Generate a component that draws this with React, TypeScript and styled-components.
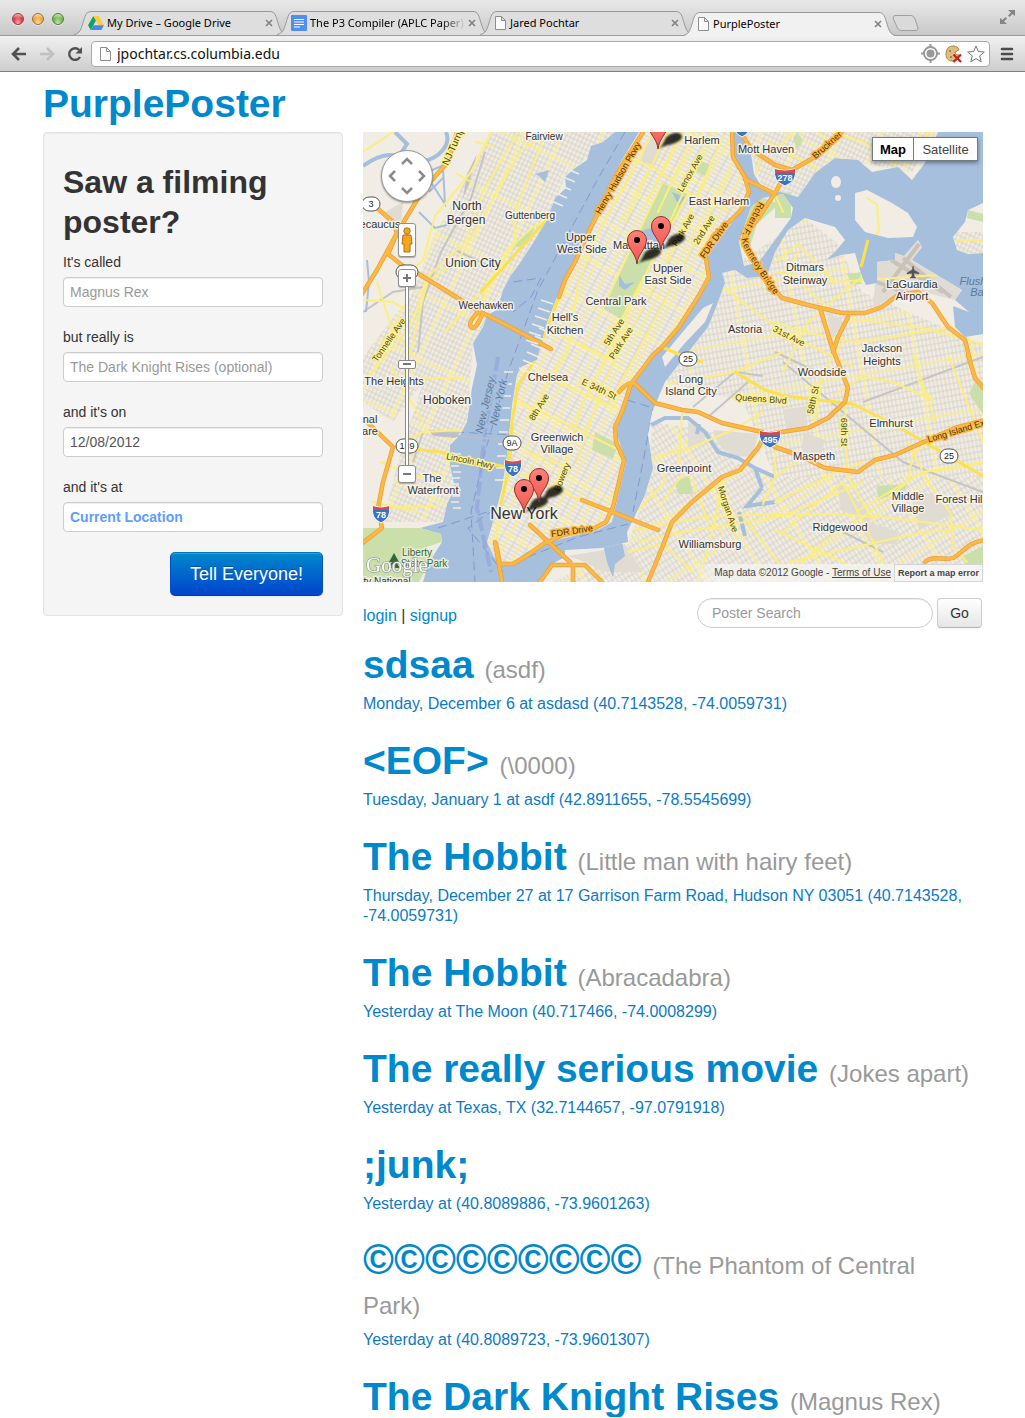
import React from "react";
import styled, { createGlobalStyle, css } from "styled-components";

const sans = `"Liberation Sans", Helvetica, Arial, sans-serif`;
const system = `"Lucida Grande", "Noto Sans", "Open Sans", sans-serif`;

const GlobalStyle = createGlobalStyle`
  *, *::before, *::after { box-sizing: border-box; }
  body { margin: 0; background: #fff; color: #333; font: 14px/20px ${sans}; }
  button, input { font-family: inherit; margin: 0; }
  a { color: #08c; text-decoration: none; }
`;

/* ---------- browser chrome ---------- */

const TabStrip = styled.div`
  display: flex;
  align-items: flex-end;
  height: 36px;
  padding: 0 10px 0 12px;
  background: linear-gradient(#e9e9e9, #c8c8c8);
  border-bottom: 1px solid #9c9c9c;
`;

const Lights = styled.div`
  display: flex;
  gap: 8px;
  width: 62px;
  padding-bottom: 10px;
`;

const Light = styled.button<{ $tone: string; $edge: string }>`
  width: 12px;
  height: 12px;
  padding: 0;
  border: 1px solid ${(p) => p.$edge};
  border-radius: 50%;
  background: radial-gradient(ellipse at 50% 95%, #fff9 0, transparent 55%),
    linear-gradient(#fff9, transparent 45%), ${(p) => p.$tone};
  box-shadow: 0 1px 0 #fff8;
`;

const TabBox = styled.div<{ $active?: boolean }>`
  position: relative;
  display: flex;
  align-items: center;
  flex: 0 1 213px;
  min-width: 0;
  height: 24px;
  margin-right: -10px;
  padding: 0 12px 0 14px;
  z-index: ${(p) => (p.$active ? 2 : 1)};
  margin-bottom: ${(p) => (p.$active ? "-1px" : "0")};
`;

const TabShape = styled.svg`
  position: absolute;
  inset: 0;
  width: 100%;
  height: 100%;
  z-index: -1;
`;

const TabLabel = styled.button<{ $faded?: boolean }>`
  display: flex;
  align-items: center;
  gap: 3px;
  flex: 1;
  min-width: 0;
  padding: 0;
  border: 0;
  background: none;
  color: #000;
  font: 11px/16px ${system};
  text-align: left;
  white-space: nowrap;
  overflow: hidden;
  ${(p) => p.$faded && css`mask-image: linear-gradient(90deg, #000 86%, transparent);`}
  svg { flex: none; }
`;

const CloseButton = styled.button`
  display: flex;
  padding: 2px;
  border: 0;
  background: none;
`;

const NewTab = styled.button`
  padding: 0;
  border: 0;
  background: none;
  height: 16px;
  margin: 0 auto 4px 6px;
`;

const FullScreen = styled.button`
  padding: 0;
  border: 0;
  background: none;
  height: 14px;
  margin-bottom: 11px;
`;

const Toolbar = styled.div`
  display: flex;
  align-items: center;
  height: 36px;
  padding: 0 11px 0 5px;
  background: linear-gradient(#f1f1f1, #cdcdcd);
  border-bottom: 1px solid #808080;
`;

const ToolButton = styled.button`
  display: flex;
  align-items: center;
  justify-content: center;
  width: 28px;
  height: 24px;
  padding: 0;
  border: 0;
  background: none;
`;

const AddressBar = styled.div`
  display: flex;
  align-items: center;
  flex: 1;
  gap: 5px;
  height: 26px;
  margin: 0 10px 0 2px;
  padding: 0 4px 0 7px;
  background: #fff;
  border: 1px solid #a9a9a9;
  border-radius: 4px;
`;

const AddressInput = styled.input`
  flex: 1;
  min-width: 0;
  padding: 0;
  border: 0;
  outline: 0;
  color: #111;
  background: none;
  font: 14px/18px ${system};
`;

/* ---------- page ---------- */

const Page = styled.main`
  padding: 12px 42px 0 43px;
`;

const Brand = styled.h1`
  margin: 0 0 8px;
  font-size: 39px;
  line-height: 40px;
`;

const Columns = styled.div`
  display: grid;
  grid-template-columns: 300px minmax(0, 1fr);
  gap: 20px;
  align-items: start;
`;

const Panel = styled.form`
  display: flex;
  flex-direction: column;
  gap: 20px;
  padding: 19px;
  background: #f5f5f5;
  border: 1px solid #e3e3e3;
  border-radius: 4px;
  box-shadow: inset 0 1px 1px #0000000d;
`;

const PanelTitle = styled.h2`
  margin: 10px 0 -10px;
  font-size: 32px;
  line-height: 40px;
`;

const Field = styled.div`
  display: flex;
  flex-direction: column;
  gap: 5px;
`;

const textBox = css`
  height: 30px;
  padding: 4px 6px;
  border: 1px solid #ccc;
  border-radius: 4px;
  background: #fff;
  color: #555;
  font-size: 14px;
  line-height: 20px;
  box-shadow: inset 0 1px 1px #00000013;
  &::placeholder { color: #999; opacity: 1; }
`;

const TextInput = styled.input<{ $located?: boolean }>`
  ${textBox}
  ${(p) => p.$located && css`&::placeholder { color: #5f9cff; font-weight: bold; }`}
`;

const SubmitButton = styled.button`
  align-self: flex-end;
  width: 153px;
  height: 44px;
  padding: 0;
  border: 1px solid #0055bb;
  border-color: #0077b8 #0050c0 #003ba8;
  border-radius: 5px;
  background: linear-gradient(#08c, #04c);
  box-shadow: inset 0 1px 0 #ffffff33, 0 1px 2px #0000000d;
  color: #fff;
  font-size: 18px;
  line-height: 20px;
  text-shadow: 0 -1px 0 #00000040;
`;

const ActionRow = styled.div`
  display: flex;
  align-items: center;
  justify-content: space-between;
  margin: 16px 1px 17px 0;
`;

const Account = styled.nav`
  padding-top: 5px;
  font-size: 16px;
  line-height: 20px;
`;

const SearchForm = styled.form`
  display: flex;
  gap: 4px;
`;

const SearchInput = styled.input`
  ${textBox}
  width: 236px;
  padding: 4px 14px;
  border-radius: 15px;
`;

const GoButton = styled.button`
  width: 45px;
  height: 30px;
  padding: 0;
  border: 1px solid #ccc;
  border-bottom-color: #b3b3b3;
  border-radius: 4px;
  background: linear-gradient(#fff, #e6e6e6);
  box-shadow: inset 0 1px 0 #ffffff33, 0 1px 2px #0000000d;
  color: #333;
  font-size: 14px;
  line-height: 20px;
`;

const PosterList = styled.ul`
  display: flex;
  flex-direction: column;
  gap: 27px;
  margin: 0;
  padding: 0;
  list-style: none;
`;

const PosterTitle = styled.h1<{ $symbols?: boolean }>`
  margin: 0;
  padding-right: 8px;
  font-size: 39px;
  line-height: 40px;
  a { ${(p) => p.$symbols && css`font-size: 42px; line-height: 20px;`} }
  small { color: #999; font-size: 24px; font-weight: normal; line-height: 20px; }
`;

const PosterDetail = styled.a`
  display: block;
  margin-top: 9px;
  color: #0c7ac4;
  font-size: 16px;
  line-height: 20px;
`;

/* ---------- map ---------- */

const MapFrame = styled.section`
  position: relative;
  height: 450px;
  overflow: hidden;
  background: #a5bfdd;
`;

const MapSvg = styled.svg`
  display: block;
  width: 100%;
  height: 100%;
`;

const MapControls = styled.div`
  position: absolute;
  top: 18px;
  left: 18px;
  display: flex;
  flex-direction: column;
  align-items: center;
  width: 52px;
`;

const PanPad = styled.div`
  display: grid;
  grid-template: 1fr 1fr 1fr / 1fr 1fr 1fr;
  width: 52px;
  height: 52px;
  padding: 2px;
  border: 1px solid #999;
  border-radius: 50%;
  background: #fff;
  box-shadow: 0 1px 2px #0006;
`;

const PanButton = styled.button<{ $area: string; $turn: number }>`
  grid-area: ${(p) => p.$area};
  display: flex;
  align-items: center;
  justify-content: center;
  padding: 0;
  border: 0;
  background: none;
  svg { transform: rotate(${(p) => p.$turn}deg); }
`;

const mapKey = css`
  display: flex;
  align-items: center;
  justify-content: center;
  width: 18px;
  padding: 0;
  border: 1px solid #8f8f8f;
  border-radius: 3px;
  background: #fff;
  box-shadow: 0 1px 1px #0004;
`;

const Pegman = styled.button`
  ${mapKey}
  height: 34px;
  margin: 21px 0 12px;
`;

const ZoomKey = styled.button`
  ${mapKey}
  height: 18px;
`;

const ZoomSlider = styled.input`
  writing-mode: vertical-lr;
  direction: rtl;
  appearance: none;
  width: 18px;
  height: 178px;
  background: linear-gradient(90deg, transparent 7px, #8a8a8a 7px, #8a8a8a 8px, #fff 8px, #fff 10px, #8a8a8a 10px, #8a8a8a 11px, transparent 11px);
  &::-webkit-slider-thumb {
    appearance: none;
    width: 18px;
    height: 9px;
    border: 1px solid #8a8a8a;
    border-radius: 2px;
    background: linear-gradient(#777, #777) center / 8px 2px no-repeat, #fff;
  }
`;

const MapTypes = styled.div`
  position: absolute;
  top: 5px;
  right: 5px;
  display: flex;
  box-shadow: 0 2px 4px #0006;
`;

const MapType = styled.button<{ $on?: boolean }>`
  height: 24px;
  width: ${(p) => (p.$on ? 42 : 64)}px;
  padding: 0;
  border: 1px solid #717b87;
  border-left-width: ${(p) => (p.$on ? 1 : 0)}px;
  background: #fff;
  color: ${(p) => (p.$on ? "#000" : "#444")};
  font-size: 13px;
  font-weight: ${(p) => (p.$on ? "bold" : "normal")};
`;

const Attribution = styled.div`
  position: absolute;
  right: 0;
  bottom: 0;
  display: flex;
  align-items: center;
  gap: 3px;
  height: 18px;
  padding-left: 24px;
  background: linear-gradient(90deg, #f5f5f500, #f5f5f5bb 30px);
  color: #444;
  font-size: 10px;
  line-height: 16px;
  a { color: #444; text-decoration: underline; }
`;

const ReportLink = styled.a`
  padding: 0 3px;
  border: 1px solid #d5d5d5;
  background: #f5f5f5;
  font-size: 9px;
  font-weight: bold;
  && { text-decoration: none; }
`;

const westLand =
  "M0 0H252L240 10L228 14L224 28L212 36L202 45L203 56L192 66L184 88L170 111L157 131L148 143L140 158L134 178L124 183L120 195L110 211L114 233L109 256L104 290L97 303L87 313V333L92 356L84 372L80 390L57 396L78 402L79 410L70 424L64 436L60 450H0Z";
const manhattan =
  "M276 0L259 28L239 68L225 101L202 145L194 165L184 191L174 228L158 235L154 243L149 273L144 323L139 356L132 383L124 410L130 423L137 433H147L164 420L184 410L202 406L235 398L249 390L257 356L263 330L254 303L255 283L267 253L290 225L301 215L346 150L344 121L371 88L387 61L371 28L369 0Z";
const bronx =
  "M376 0L388 22L391 42L400 57L418 60L435 65L452 41L472 26L495 28L509 40L535 35L549 48L562 31L575 0Z";
const queens =
  "M359 141L372 138L384 146L404 144L412 120L425 98L442 86L472 95L482 108L472 120L463 128L478 123L492 121L499 145L503 153L514 151V130L532 128V121L541 124L555 108L559 115L549 128L599 158L592 168L612 185L606 180L590 174L592 195L602 205L620 202V450H179L187 433L202 425V418L239 416L265 410L264 400L269 390L282 363L290 336L285 303L289 280L302 250L319 228L345 195L352 178L362 151Z";
const eastLand = "M620 71L605 78L602 90L590 105L594 118L605 122L620 121Z";
const rikers = "M492 61L504 58L529 71L545 81L554 95L550 105L525 106L502 100L492 88Z";
const wards = "M388 75L400 66L420 62L430 76L428 86L412 108L396 130L381 134L376 110Z";
const roosevelt = "M350 171L342 190L322 211L302 235L299 225L318 202L340 176Z";

const highways = [
  "M94 0L85 30L60 58L34 101L14 138L-3 165",
  "M14 76L30 90L34 101L25 122L40 134L54 141L77 155L114 178L147 195L188 217",
  "M116 180C108 186 104 194 110 196C116 194 116 186 120 182",
  "M280 0L255 40L243 65L228 95L212 130L202 148L196 165",
  "M369 0L370 25L382 45L386 60L378 78L368 88L350 104L342 121L346 145L335 165L316 195L299 215L290 223L268 252L259 280L252 295L253 310L261 328L256 350L250 375L243 390L232 396L200 403L180 412L165 423L150 432L137 432L133 412",
  "M425 38L412 61L396 85L381 105L385 120L400 145L412 158L419 166L445 173L479 181L502 181L519 175L535 163L555 160L569 171L585 195L602 208L607 228L605 223L612 246L622 258",
  "M377 0L389 18L412 33L429 38L452 25L479 0M382 47L412 62",
  "M457 176L469 215L472 223L485 256L482 270L465 286L445 296L412 301L402 303L395 316L377 338L359 345L329 370L309 390L299 416L285 450",
  "M485 185L475 205L470 220",
  "M256 260C262 252 268 250 272 252L292 271L319 278L335 280L359 291L399 300L412 315L435 323L462 336L495 340L512 328L532 323L565 308L592 296L622 288",
  "M219 368L295 398M167 393L207 430M132 410L139 450",
  "M177 450L189 433L222 433L239 450M210 433V450",
  "M4 290L30 315L20 350L15 376L19 396L-3 413",
  "M562 430C570 422 585 430 592 425C602 418 606 410 622 408",
];

const avenues = [
  "M196 165L187 185L172 228L155 253L149 290L146 335L135 385L133 412",
  "M30 315L77 320L97 326L144 335L200 360L245 380M0 20L30 0M155 0L120 60L102 110L64 145L50 190L10 240L0 246",
  "M190 0L158 18L120 85L95 128L64 150L52 200L40 250M175 0L178 12L150 85L153 110L118 160L82 200M200 80L170 95L140 122L118 170",
  "M128 0L108 40L72 84L60 128L45 142M94 42L108 50M113 10L130 14M14 150L30 200L50 222M0 168L30 170L50 182",
  "M30 315L60 300L100 298M18 330L55 345L78 340M15 376L75 374M18 250L50 246L100 246M28 235L60 290M10 370L55 380",
  "M299 51L240 175M325 62L258 188M270 28L290 35L328 62L365 78M290 0L265 48L238 95L215 152L205 220L180 260",
  "M305 0L262 90M318 0L284 70M332 0L295 80M348 0L262 188L220 270L196 350M360 5L310 118L240 252L214 330M368 40L300 172L248 270M190 200L250 228M170 240L268 282M158 270L220 300L256 318M165 320L205 335",
  "M412 140L470 150L620 140M359 155L420 200L490 234M372 240L402 258L422 264L490 272L530 292L620 344M412 130L435 112L472 150M412 190L440 200L494 210L600 194M490 187L560 196L620 212",
  "M499 145L480 160L445 190L420 240M505 108L516 100L514 72L504 66M498 150L500 128L512 105",
  "M319 282L316 330L330 350L345 390L360 400M306 252L372 240L420 220M289 325L322 318L370 298L400 280M300 330L302 350L275 378M325 335L300 370M360 345L352 390L335 450",
  "M270 398L340 385L412 382L470 382L530 386L620 398M275 410L320 400L420 384L500 350M265 420L300 412L330 440M412 370L470 342L500 330M412 398L500 440M420 450L460 410L500 385L545 350L550 320",
  "M412 345L440 325M452 290L460 240L480 210M482 270L484 342L505 380L512 390M435 120L425 140L460 172M545 310L565 350L588 382L590 415L604 430M552 320L580 302M480 350L520 430M496 378L560 340L620 330",
  "M472 262L500 245L530 250L570 268M555 248L570 270M550 223L572 290M585 223L604 270L620 310M420 400L480 350M425 430L560 400L590 398M412 320L412 345L400 372M380 384L430 450",
  "M400 20L390 50M405 10L460 40M430 0L412 20M470 0L500 10L530 32L555 20L565 0M455 0L468 14M594 108H620M412 62L420 80",
];

const parks = [
  "M299 51L325 62L258 187L240 176Z",
  "M336 28L348 33L342 44L330 38Z",
  "M381 78L400 66L416 72L394 92L384 124L378 110Z",
  "M428 60L412 62V86L428 86Z",
  "M0 396L57 396L78 402L79 410L60 416L70 422L56 450H0Z",
  "M232 300L255 312L250 327L229 318Z",
  "M312 350L326 344L330 362L315 362Z",
  "M514 354L545 352L540 360L515 368Z",
  "M612 250H620V282L606 262Z",
  "M605 78L620 82V90L604 86Z",
  "M484 142L498 140L499 152L488 152Z",
  "M600 424L620 414V436L604 438Z",
  "M140 318L150 312L148 328L140 328Z",
  "M434 0L440 8L434 18L430 6Z",
  "M172 94L155 108L152 116L166 110Z",
  "M124 184L134 190L128 198L120 194Z",
];

const builtUp = [
  "M514 130L532 121L541 124L555 108L559 115L549 128L599 158L592 168L560 160L535 163L510 175Z",
  "M465 180L480 190L468 210Z",
  "M325 290L345 300L340 310L325 316Z",
  "M350 298L395 302L390 325L370 324L355 312Z",
  "M420 278L444 274V296L424 300Z",
  "M440 300L462 308L458 322L440 320Z",
  "M474 348L505 380L508 392L478 378Z",
  "M500 388L535 400L534 412L508 412L498 396Z",
  "M548 360L570 362L590 382L556 398Z",
  "M286 5L302 10L292 34L278 28Z",
  "M22 80L40 70L38 92L24 92Z",
  "M205 424L240 418L262 412L280 440H240L222 430Z",
];

type Label = [string, number, number, number?, number?];

const placeLabels: Label[] = [
  ["Fairview", 181, 8, 10], ["North", 104, 78, 12], ["Bergen", 103, 92, 12], ["Guttenberg", 167, 87, 10],
  ["Union City", 110, 135, 12], ["Weehawken", 123, 177, 10], ["Harlem", 339, 12, 11], ["Mott Haven", 403, 21, 11],
  ["ecaucus", 17, 96, 11], ["Upper", 218, 109, 11], ["West Side", 219, 121, 11], ["East Harlem", 356, 73, 11],
  ["Manhattan", 276, 117, 11], ["Upper", 305, 140, 11], ["East Side", 305, 152, 11], ["Central Park", 253, 173, 11],
  ["Hell's", 202, 189, 11], ["Kitchen", 202, 202, 11], ["Chelsea", 185, 249, 11], ["Greenwich", 194, 309, 11],
  ["Village", 194, 321, 11], ["Astoria", 382, 201, 11], ["Ditmars", 442, 139, 11], ["Steinway", 442, 152, 11],
  ["LaGuardia", 549, 156, 11], ["Airport", 549, 168, 11], ["Jackson", 519, 220, 11], ["Heights", 519, 233, 11],
  ["Woodside", 459, 244, 11], ["Elmhurst", 528, 295, 11], ["Maspeth", 451, 328, 11], ["Middle", 545, 368, 11],
  ["Village", 545, 380, 11], ["Forest Hil", 596, 371, 11], ["Ridgewood", 477, 399, 11], ["Williamsburg", 347, 416, 11],
  ["Greenpoint", 321, 340, 11], ["Long", 328, 251, 11], ["Island City", 328, 263, 11], ["Hoboken", 84, 272, 12],
  ["The Heights", 31, 253, 11], ["nal", 7, 291, 11], ["are", 7, 303, 11], ["The", 69, 350, 11],
  ["Waterfront", 70, 362, 11], ["New York", 161, 387, 16], ["ty National", 24, 453, 10],
];

const roadLabels: Label[] = [
  ["NJ Turnp", 90, 14, 10, -66], ["Tonnelle Ave", 26, 208, 9, -55], ["Lenox Ave", 327, 41, 9, -60],
  ["Park Ave", 320, 98, 9, -60], ["2nd Ave", 341, 98, 9, -58], ["5th Ave", 251, 200, 9, -57],
  ["Park Ave", 258, 211, 9, -57], ["8th Ave", 176, 275, 9, -58], ["Bowery", 199, 345, 9, -68],
  ["E 34th St", 236, 257, 9, 25], ["31st Ave", 426, 204, 9, 27], ["Queens Blvd", 398, 267, 9, 4],
  ["58th St", 450, 268, 9, -78], ["69th St", 481, 300, 9, 90], ["Morgan Ave", 365, 377, 9, 72],
  ["Lincoln Hwy", 107, 329, 9, 12],
];

const highwayLabels: Label[] = [
  ["Henry Hudson Pkwy", 255, 46, 9, -60], ["FDR Drive", 351, 108, 9, -55],
  ["Bruckner", 464, 13, 9, -42], ["FDR Drive", 209, 399, 9, -8], ["Long Island Ex", 593, 299, 9, -17],
];

const waterLabels: Label[] = [
  ["New Jersey", 122, 273, 11, -77], ["New York", 135, 270, 11, -77], ["Flush", 610, 153, 11], ["Ba", 614, 164, 11],
];

const MapText = ({ items, fill, halo, italic }: { items: Label[]; fill: string; halo: string; italic?: boolean }) => (
  <g fill={fill} stroke={halo} strokeWidth={3} strokeLinejoin="round" paintOrder="stroke" textAnchor="middle" fontStyle={italic ? "italic" : "normal"}>
    {items.map(([text, x, y, size = 11, angle = 0], i) => (
      <text key={i} x={x} y={y} fontSize={size} dominantBaseline={angle ? "central" : undefined} transform={`rotate(${angle} ${x} ${y})`}>{text}</text>
    ))}
  </g>
);

const Interstate = ({ x, y, n }: { x: number; y: number; n: string }) => {
  const w = n.length > 2 ? 10 : 8;
  return (
    <g transform={`translate(${x} ${y})`}>
      <path d={`M${-w} -8Q0 -5 ${w} -8Q${w + 3} 4 0 9Q${-w - 3} 4 ${-w} -8Z`} fill="#3b74c4" stroke="#fff" />
      <path d={`M${-w} -8Q0 -5 ${w} -8V-4H${-w}Z`} fill="#d44a4f" />
      <text y="4" fontSize="9" fontWeight="bold" fill="#fff" textAnchor="middle">{n}</text>
    </g>
  );
};

const RouteBadge = ({ x, y, n }: { x: number; y: number; n: string }) => {
  const w = n.length > 2 ? 11 : 9;
  return (
    <g transform={`translate(${x} ${y})`}>
      <rect x={-w} y="-7" width={w * 2} height="14" rx="7" fill="#fff" stroke="#555" />
      <text y="3" fontSize="9" fill="#222" textAnchor="middle">{n}</text>
    </g>
  );
};

const pins = [[295, 17], [298, 118], [274, 132], [176, 370], [161, 381]];

const Street = ({ id, angle, w, h, major, stripe }: { id: string; angle: number; w: number; h: number; major: number; stripe: number }) => (
  <pattern id={id} width={w * major} height={h * stripe} patternUnits="userSpaceOnUse" patternTransform={`rotate(${angle})`}>
    {Array.from({ length: major }, (_, i) => <path key={i} d={`M${i * w + 2} 0V${h * stripe}`} stroke="#d3cdc0" strokeWidth=".8" />)}
    {Array.from({ length: stripe }, (_, i) => <path key={i} d={`M0 ${i * h + 2}H${w * major}`} stroke="#d3cdc0" strokeWidth=".8" />)}
    <path d={`M2 0V${h * stripe}M0 2H${w * major}`} stroke="#fbef8d" strokeWidth="1.6" />
  </pattern>
);

const CityMap = () => (
  <MapSvg viewBox="0 0 620 450" preserveAspectRatio="xMidYMid slice" role="img" aria-label="Map of New York" fontFamily="Liberation Sans, Arial, sans-serif">
    <defs>
      <Street id="st-man" angle={29} w={7} h={4} major={2} stripe={10} />
      <Street id="st-nj" angle={25} w={4} h={5} major={9} stripe={12} />
      <Street id="st-queens" angle={-10} w={4} h={6} major={14} stripe={9} />
      <Street id="st-bk" angle={-32} w={4} h={6} major={13} stripe={9} />
      <clipPath id="land"><path d={westLand + manhattan + bronx + queens + eastLand + rikers + wards} /></clipPath>
      <path id="rfk" d="M399 71L385 98Q379 106 385 117L400 141L420 170" />
      <filter id="soft"><feGaussianBlur stdDeviation="1" /></filter>
      <linearGradient id="pin" x2="0" y2="1"><stop stopColor="#ff8079" /><stop offset="1" stopColor="#f0574f" /></linearGradient>
    </defs>
    <rect width="620" height="450" fill="#a5bfdd" />
    <g fill="none" stroke="#8498cb" strokeWidth="1" strokeDasharray="9 5">
      <path d="M262 0L232 52L202 108L175 158L145 240L122 320L108 380L112 450" />
      <path d="M150 150L178 146L168 165L150 180M75 396L130 378L105 396L140 440M92 300L150 303M264 268L290 276L280 330L270 380M165 425L215 405L265 392" />
    </g>
    <path d="M135 225L122 300L114 376L128 440" fill="none" stroke="#94a4dc" strokeWidth="4" strokeDasharray="14 4" opacity=".7" />
    <g fill="#f1ede4">
      {[westLand, manhattan, bronx, queens, eastLand, rikers, wards, roosevelt].map((d, i) => <path key={i} d={d} />)}
      <ellipse cx="473" cy="50" rx="5" ry="6" /><circle cx="475" cy="66" r="3" />
    </g>
    <g clipPath="url(#land)">
      <path d={manhattan} fill="url(#st-man)" />
      <path d="M130 0H252L202 45L184 88L140 158L110 211L104 290L87 313L92 356L80 390H20L35 330L60 250L30 290L0 270V225L50 160L70 105Z" fill="url(#st-nj)" />
      <path d="M359 141L425 98L442 86L475 112L499 160L620 212V345H412L380 270L302 250L345 195Z" fill="url(#st-queens)" />
      <path d="M290 290L350 300L370 330L412 345H620V450H190L265 412L282 363Z" fill="url(#st-bk)" />
      <path d="M380 0H575L549 40L472 26L435 65L400 57ZM590 100H620V121H594Z" fill="url(#st-nj)" />
      <g fill="#e0dbd3">{builtUp.map((d, i) => <path key={i} d={d} />)}</g>
      <g fill="#cadfaa">{parks.map((d, i) => <path key={i} d={d} />)}</g>
      <g fill="none" stroke="#c4c5c7" strokeWidth="2">
        <path d="M122 20L108 66L78 120L60 170L55 220M92 118L130 136M0 180L30 160L60 155M330 275L372 240L400 244M345 285L385 250M420 230L540 330L620 360M500 270L620 225M480 400L520 420M412 220L450 238M60 300L50 330" />
      </g>
      <path d="M66 298L98 300L92 306L70 304ZM114 22L106 52L100 66L104 42Z" fill="#c4c2c2" />
      <path d="M528 128L580 160M520 160L556 112M540 126L588 165M514 150L560 168" stroke="#c9c2bb" strokeWidth="4" fill="none" />
      <g fill="none" stroke="#a5bfdd">
        <path d="M0 34C25 16 35 24 58 30C78 26 88 12 83 0M32 0L44 12L36 24" strokeWidth="4" />
        <path d="M56 32L82 72L80 36L60 54M60 42L88 30M66 60L80 46" strokeWidth="2" />
        <path d="M4 128L6 150L3 180M56 80L72 96L88 92" strokeWidth="2" />
        <path d="M288 293L302 286L325 286L342 300L355 320L375 326L392 336L399 356M392 336L412 345M399 356L384 374L412 370M376 380L382 404M336 292L334 302" strokeWidth="4" />
      </g>
      <g fill="#a5bfdd">
        <path d="M279 99Q288 93 298 101L295 112L276 114ZM309 60L322 65L316 74ZM256 143L262 152L272 150L262 158L256 154ZM240 412L258 406L262 424L252 432L250 446L244 430ZM172 42L186 38L182 50L176 44Z" />
      </g>
      <g fill="none" strokeLinejoin="round" strokeLinecap="round">
        {avenues.map((d, i) => <path key={i} d={d} stroke="#fbee7e" strokeWidth="2" />)}
        <path d="M372 240L402 258L422 264L490 272L530 292L620 344M30 315L77 320L97 326L144 335M196 165L172 228L155 253L149 290L146 335L135 385M204 66L165 108L118 160" stroke="#fbe24c" strokeWidth="3" />
      </g>
    </g>
    <path d="M80 320L97 326L144 335M299 215L322 225L340 230M505 108L498 135" fill="none" stroke="#fbe24c" strokeWidth="3" />
    <path d="M74 302L152 309" stroke="#b4bfd0" strokeWidth="2" />
    <g fill="none" strokeLinejoin="round" strokeLinecap="round">
      {highways.map((d, i) => <path key={i} d={d} stroke="#e9a040" strokeWidth="4.5" />)}
      {highways.map((d, i) => <path key={i} d={d} stroke="#fdb842" strokeWidth="3" />)}
    </g>
    <g stroke="#f1ede4" strokeWidth="1.5">
      {Array.from({ length: 11 }, (_, i) => <path key={i} d={`M${204 - i * 4} ${52 + i * 8}l-14 -6`} transform={`translate(${i > 4 ? 6 : 12} ${i > 4 ? 110 : -10})`} />)}
      {Array.from({ length: 10 }, (_, i) => <path key={i} d={`M${150 - i} ${240 + i * 12}h-9M${90 - (i % 3)} ${322 + i * 6}h8`} />)}
      {Array.from({ length: 6 }, (_, i) => <path key={i} d={`M${190 - i * 3} ${172 + i * 8}l-12 -4`} />)}
    </g>
    <MapText items={roadLabels} fill="#4c452b" halo="#fbf18f" />
    <MapText items={highwayLabels} fill="#4c3410" halo="#fdb842" />
    <text fontSize="9" fill="#4c3410" stroke="#fdb842" strokeWidth="3" paintOrder="stroke" dominantBaseline="central"><textPath href="#rfk">Robert F. Kennedy Bridge</textPath></text>
    <MapText items={waterLabels} fill="#62789b" halo="#a5bfdd" italic />
    <MapText items={placeLabels} fill="#333" halo="#f8f6f0dd" />
    <MapText items={[["Liberty", 54, 424, 10], ["State Park", 61, 435, 10]]} fill="#37663c" halo="#e5efd6" />
    <path d="M31 421L26 430H29L25 436H30V439H32V436H37L33 430H36Z" fill="#37663c" />
    <path d="M550 134L551 138L556 141V142L551 141V144L553 146H547L549 144V141L544 142V141L549 138Z" stroke="#555" strokeWidth=".5" fill="#555" />
    <Interstate x={422} y={45} n="278" /><Interstate x={407} y={307} n="495" />
    <Interstate x={150} y={336} n="78" /><Interstate x={18} y={382} n="78" />
    <Interstate x={379} y={-4} n="" />
    <RouteBadge x={8} y={72} n="3" /><RouteBadge x={149} y={311} n="9A" />
    <RouteBadge x={325} y={227} n="25" /><RouteBadge x={586} y={324} n="25" />
    <RouteBadge x={44} y={314} n="139" /><RouteBadge x={44} y={140} n="495" />
    <g filter="url(#soft)" opacity=".8">
      {pins.map(([x, y], i) => <path key={i} transform={`translate(${x} ${y})`} d="M0 0C8 -5 4 -11 13 -15C22 -19 28 -13 21 -8C15 -4 6 -4 0 0Z" />)}
    </g>
    {pins.map(([x, y], i) => (
      <g key={i} transform={`translate(${x} ${y})`}>
        <path d="M0 0C-1 -11 -9.500 -15 -9.500 -24A9.500 9.500 0 0 1 9.500 -24C9.500 -15 1 -11 0 0Z" fill="url(#pin)" stroke="#8e2f2b" />
        <circle cy="-24" r="3" />
      </g>
    ))}
    <text x="3" y="440" fontFamily="Liberation Serif, serif" fontSize="21" fill="#fff" stroke="#999" strokeWidth="1.5" paintOrder="stroke" opacity=".9">Google</text>
  </MapSvg>
);

const Chevron = () => (
  <svg width="14" height="10" viewBox="0 0 14 10"><path d="M2 8L7 3L12 8" fill="none" stroke="#8b8b8b" strokeWidth="2.500" /></svg>
);

const MapView = () => (
  <MapFrame aria-label="Poster map">
    <CityMap />
    <MapControls>
      <PanPad>
        <PanButton aria-label="Pan up" $area="1 / 2" $turn={0}><Chevron /></PanButton>
        <PanButton aria-label="Pan left" $area="2 / 1" $turn={-90}><Chevron /></PanButton>
        <PanButton aria-label="Pan right" $area="2 / 3" $turn={90}><Chevron /></PanButton>
        <PanButton aria-label="Pan down" $area="3 / 2" $turn={180}><Chevron /></PanButton>
      </PanPad>
      <Pegman aria-label="Street View">
        <svg width="12" height="26" viewBox="0 0 12 26">
          <path d="M2 8H10L11 17H9V25H3V17H1Z" fill="#f6a61c" stroke="#b56f10" />
          <circle cx="6" cy="4" r="3.200" fill="#f6a61c" stroke="#b56f10" />
        </svg>
      </Pegman>
      <ZoomKey aria-label="Zoom in"><svg width="10" height="10"><path d="M1 5H9M5 1V9" stroke="#777" strokeWidth="2" /></svg></ZoomKey>
      <ZoomSlider type="range" aria-label="Zoom" defaultValue={57} />
      <ZoomKey aria-label="Zoom out"><svg width="10" height="10"><path d="M1 5H9" stroke="#777" strokeWidth="2" /></svg></ZoomKey>
    </MapControls>
    <MapTypes>
      <MapType $on>Map</MapType>
      <MapType>Satellite</MapType>
    </MapTypes>
    <Attribution>
      <span>Map data ©2012 Google - <a href="#terms">Terms of Use</a></span>
      <ReportLink href="#report">Report a map error</ReportLink>
    </Attribution>
  </MapFrame>
);

/* ---------- chrome icons ---------- */

const PageIcon = () => (
  <svg width="13" height="16" viewBox="0 0 13 16"><path d="M1.500 1.500H7.500L11.500 5.500V14.500H1.500ZM7.500 1.500V5.500H11.500" fill="#fafafa" stroke="#8c8c8c" /></svg>
);
const DriveIcon = () => (
  <svg width="16" height="14" viewBox="0 0 16 14">
    <path d="M5.300 0L8 4.600L2.700 14L0 9.300Z" fill="#12a263" /><path d="M5.300 0H10.700L16 9.300H10.700Z" fill="#fbcd3e" /><path d="M5.400 9.300H16L13.300 14H2.700Z" fill="#4a86ec" />
  </svg>
);
const DocsIcon = () => (
  <svg width="16" height="16" viewBox="0 0 16 16"><rect width="16" height="16" rx="1" fill="#4f8ff3" /><path d="M3 4.500H13M3 7H13M3 9.500H13M3 12H9" stroke="#fff" strokeWidth="1.200" /></svg>
);

const Tab = ({ icon, title, active, faded }: { icon: React.ReactNode; title: string; active?: boolean; faded?: boolean }) => (
  <TabBox $active={active}>
    <TabShape viewBox="0 0 213 24" preserveAspectRatio="none" aria-hidden>
      <path d="M0 24C6 23 7 18 9 12C11 5 12 .5 17 .5H196C201 .5 202 5 204 12C206 18 207 23 213 24Z" fill={active ? "#f1f1f1" : "#dedede"} />
      <path d="M0 23.500C6 22.500 7 18 9 12C11 5 12 .5 17 .5H196C201 .5 202 5 204 12C206 18 207 22.500 213 23.500" fill="none" stroke="#999" />
    </TabShape>
    <TabLabel $faded={faded}>{icon}{title}</TabLabel>
    <CloseButton aria-label={`Close ${title}`}>
      <svg width="8" height="8"><path d="M1 1L7 7M7 1L1 7" stroke="#808080" strokeWidth="1.600" /></svg>
    </CloseButton>
  </TabBox>
);

const BrowserChrome = () => (
  <header>
    <TabStrip>
      <Lights>
        <Light aria-label="Close" $tone="#e2404a" $edge="#8f4345" />
        <Light aria-label="Minimize" $tone="#f0a63a" $edge="#94703c" />
        <Light aria-label="Zoom" $tone="#78b94e" $edge="#567d45" />
      </Lights>
      <Tab icon={<DriveIcon />} title="My Drive – Google Drive" />
      <Tab icon={<DocsIcon />} title="The P3 Compiler (APLC Paper)" faded />
      <Tab icon={<PageIcon />} title="Jared Pochtar" />
      <Tab icon={<PageIcon />} title="PurplePoster" active />
      <NewTab aria-label="New tab">
        <svg width="27" height="16" viewBox="0 0 27 16"><path d="M3 .5H19Q22 .5 23 4L26 13Q26 15.500 24 15.500H9Q6 15.500 5 12L1 3Q1 .5 3 .5Z" fill="#dadada" stroke="#a0a0a0" /></svg>
      </NewTab>
      <FullScreen aria-label="Full screen">
        <svg width="15" height="14" viewBox="0 0 15 14"><path d="M8 0H15V6L12.500 4L9.500 7L8 5.500L11 2.500ZM7 14H0V8L2.500 10L5.500 7L7 8.500L4 11.500Z" fill="#858585" /></svg>
      </FullScreen>
    </TabStrip>
    <Toolbar>
      <ToolButton aria-label="Back"><svg width="16" height="14" viewBox="0 0 16 14"><path d="M8 1L2 7L8 13M2 7H15" fill="none" stroke="#505050" strokeWidth="2.600" /></svg></ToolButton>
      <ToolButton aria-label="Forward"><svg width="16" height="14" viewBox="0 0 16 14"><path d="M8 1L14 7L8 13M14 7H1" fill="none" stroke="#c0c0c0" strokeWidth="2.600" /></svg></ToolButton>
      <ToolButton aria-label="Reload"><svg width="16" height="16" viewBox="0 0 16 16"><path d="M13 11A5.800 5.800 0 1 1 12.200 4" fill="none" stroke="#505050" strokeWidth="2.400" /><path d="M15 1V7.500H8.500Z" fill="#505050" /></svg></ToolButton>
      <AddressBar>
        <PageIcon />
        <AddressInput aria-label="Address" defaultValue="jpochtar.cs.columbia.edu" />
        <svg width="19" height="19" viewBox="0 0 19 19"><circle cx="9.500" cy="9.500" r="6.500" fill="none" stroke="#999" strokeWidth="2" /><circle cx="9.500" cy="9.500" r="4" fill="#999" /><path d="M9.500 0V4M9.500 15V19M0 9.500H4M15 9.500H19" stroke="#999" strokeWidth="2" /></svg>
        <svg width="17" height="18" viewBox="0 0 17 18"><path d="M8 1C11 1 13 2 14 5C12 5 12 7 10 7C10 9 12 10 14 10C13 14 11 16 7 16C3 16 1 13 1 9C1 4 4 1 8 1Z" fill="#dfbd7e" stroke="#a98245" /><circle cx="5" cy="6" r="1" fill="#94713b" /><circle cx="6" cy="12" r="1" fill="#94713b" /><path d="M8.500 9.500L16 17M16 9.500L8.500 17" stroke="#c9201b" strokeWidth="2.300" /></svg>
        <svg width="18" height="18" viewBox="0 0 18 18"><path d="M9 1L11.300 6.500L17.300 7L12.700 10.900L14.200 16.800L9 13.600L3.800 16.800L5.300 10.900L.7 7L6.700 6.500Z" fill="#fff" stroke="#777" /></svg>
      </AddressBar>
      <svg width="14" height="14"><path d="M2 2H12M2 7H12M2 12H12" stroke="#4c4c4c" strokeWidth="2.600" strokeLinecap="round" /></svg>
    </Toolbar>
  </header>
);

const fields = [
  { id: "called", label: "It's called", placeholder: "Magnus Rex" },
  { id: "really", label: "but really is", placeholder: "The Dark Knight Rises (optional)" },
  { id: "date", label: "and it's on", value: "12/08/2012" },
  { id: "place", label: "and it's at", placeholder: "Current Location", located: true },
];

const posters = [
  { title: "sdsaa", alias: "(asdf)", detail: "Monday, December 6 at asdasd (40.7143528, -74.0059731)" },
  { title: "<EOF>", alias: "(\\0000)", detail: "Tuesday, January 1 at asdf (42.8911655, -78.5545699)" },
  { title: "The Hobbit", alias: "(Little man with hairy feet)", detail: "Thursday, December 27 at 17 Garrison Farm Road, Hudson NY 03051 (40.7143528, -74.0059731)" },
  { title: "The Hobbit", alias: "(Abracadabra)", detail: "Yesterday at The Moon (40.717466, -74.0008299)" },
  { title: "The really serious movie", alias: "(Jokes apart)", detail: "Yesterday at Texas, TX (32.7144657, -97.0791918)" },
  { title: ";junk;", detail: "Yesterday at (40.8089886, -73.9601263)" },
  { title: "©©©©©©©©©", alias: "(The Phantom of Central Park)", detail: "Yesterday at (40.8089723, -73.9601307)", symbols: true },
  { title: "The Dark Knight Rises", alias: "(Magnus Rex)" },
];

export default function App() {
  return (
    <>
      <GlobalStyle />
      <BrowserChrome />
      <Page>
        <Brand><a href="#home">PurplePoster</a></Brand>
        <Columns>
          <Panel onSubmit={(e) => e.preventDefault()}>
            <PanelTitle>Saw a filming poster?</PanelTitle>
            {fields.map((f) => (
              <Field key={f.id}>
                <label htmlFor={f.id}>{f.label}</label>
                <TextInput id={f.id} placeholder={f.placeholder} defaultValue={f.value} $located={f.located} />
              </Field>
            ))}
            <SubmitButton>Tell Everyone!</SubmitButton>
          </Panel>
          <div>
            <MapView />
            <ActionRow>
              <Account><a href="#login">login</a> | <a href="#signup">signup</a></Account>
              <SearchForm onSubmit={(e) => e.preventDefault()}>
                <SearchInput aria-label="Poster Search" placeholder="Poster Search" />
                <GoButton>Go</GoButton>
              </SearchForm>
            </ActionRow>
            <PosterList>
              {posters.map((p, i) => (
                <li key={i}>
                  <PosterTitle $symbols={p.symbols}>
                    <a href={`#poster-${i}`}>{p.title}</a> {p.alias && <small>{p.alias}</small>}
                  </PosterTitle>
                  {p.detail && <PosterDetail href={`#map-${i}`}>{p.detail}</PosterDetail>}
                </li>
              ))}
            </PosterList>
          </div>
        </Columns>
      </Page>
    </>
  );
}
